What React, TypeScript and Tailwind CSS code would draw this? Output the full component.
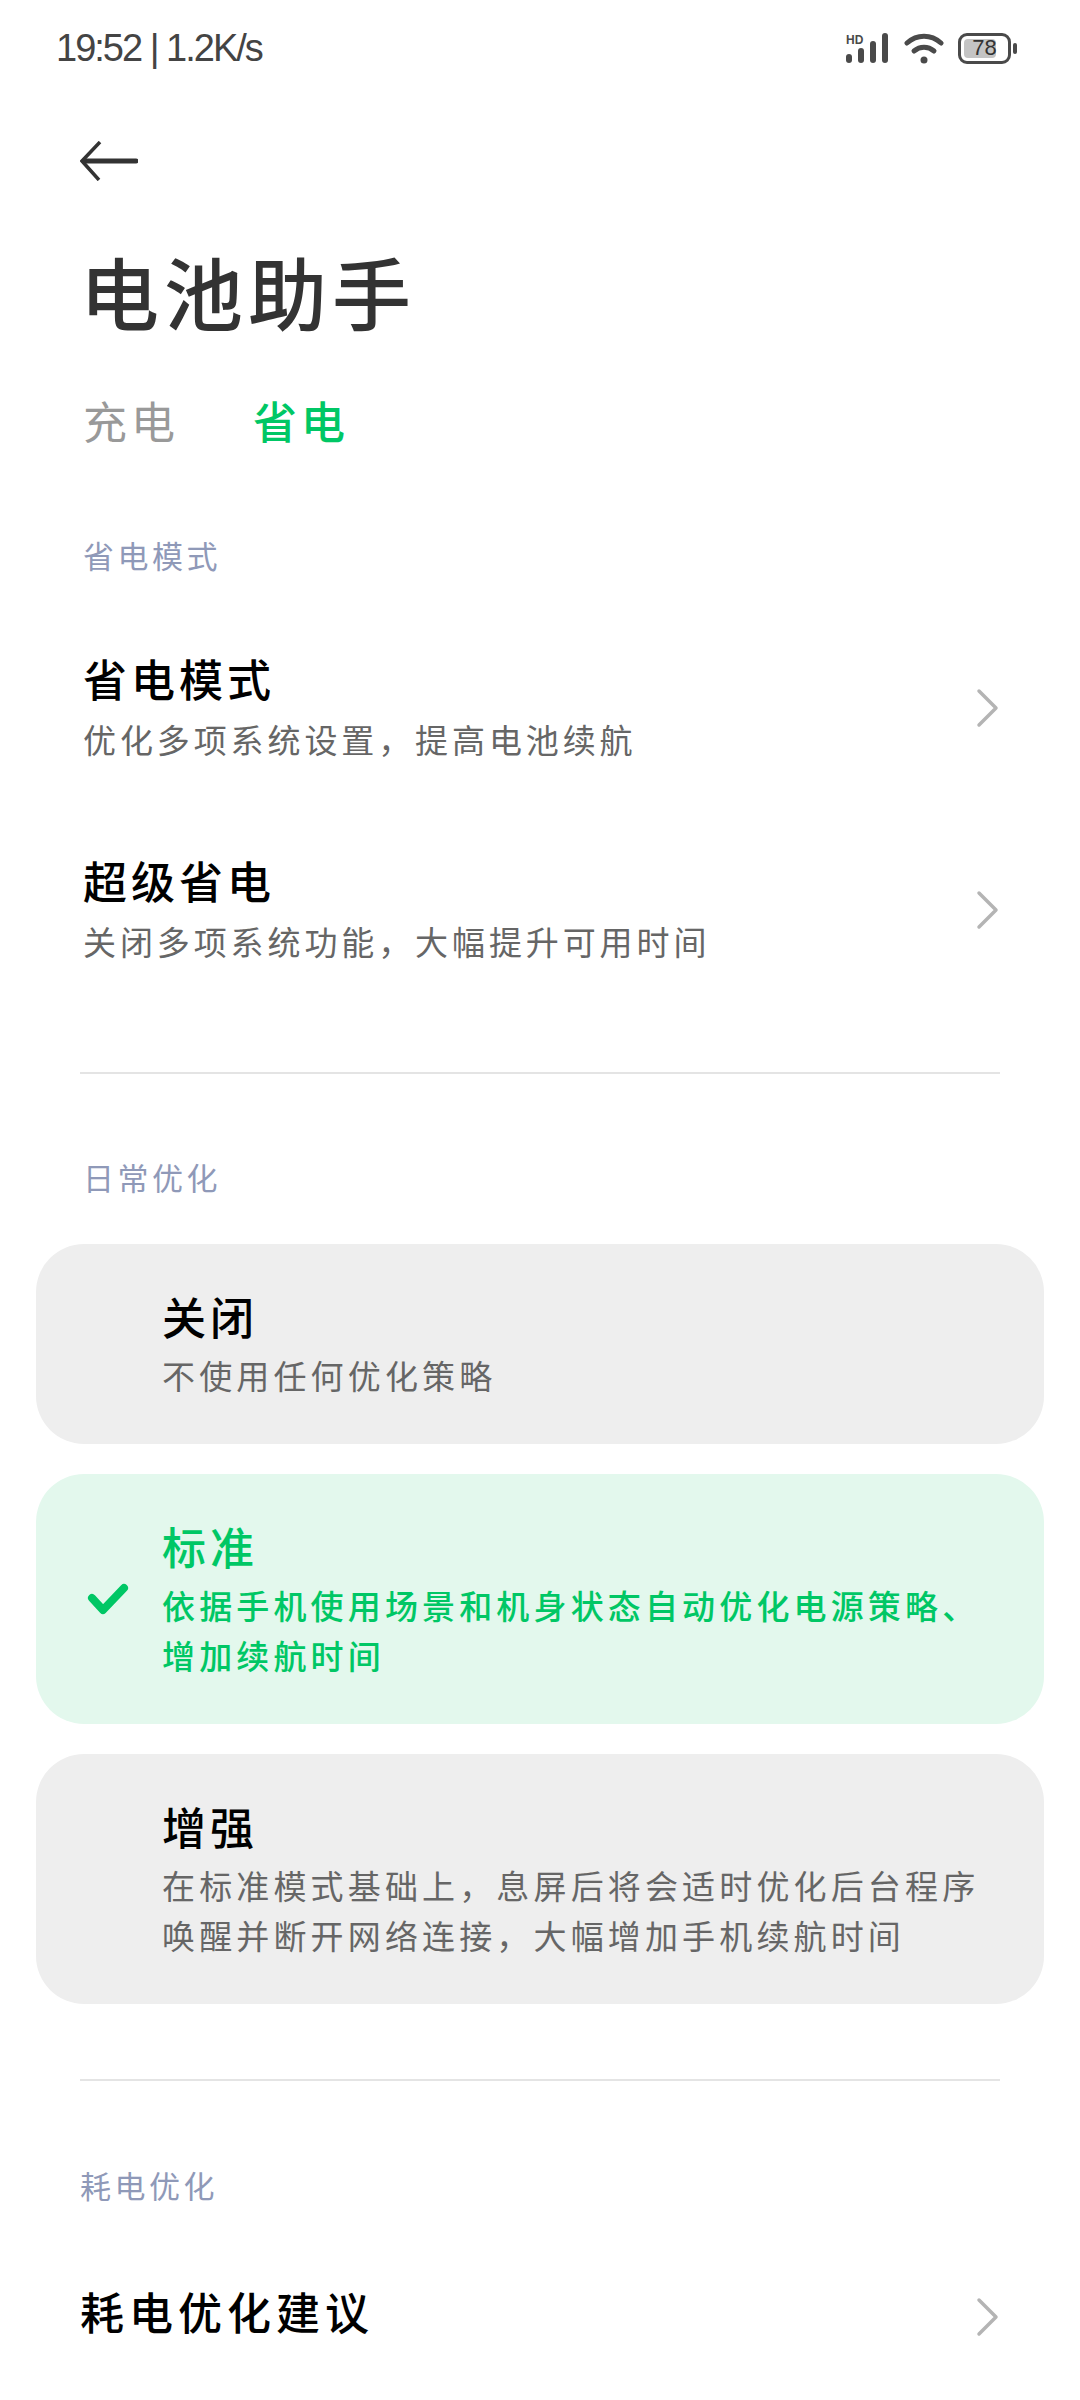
const FONT = "font-['Noto_Sans_CJK_SC',sans-serif]";

function Chevron() {
  return (
    <svg width="24" height="40" viewBox="0 0 24 40" fill="none" stroke="#b4b4b4" strokeWidth="3.5" strokeLinecap="round" strokeLinejoin="round">
      <path d="M3 3l17 17L3 37" />
    </svg>
  );
}

function Divider() {
  return <div className="mx-[80px] h-[2px] bg-[#e4e4e4]" />;
}

function SectionLabel({ children, className }: { children: string; className: string }) {
  return <div className={`text-[31px] leading-[40px] tracking-[3.5px] text-[#8f99b8] ${className}`}>{children}</div>;
}

function Row({ title, sub, className }: { title: string; sub: string; className: string }) {
  return (
    <div className={`flex items-center justify-between pl-[83px] pr-[80px] ${className}`}>
      <div className="pb-[3px]">
        <div className="mb-[9px] text-[44px] leading-[56px] tracking-[4px] font-medium text-black">{title}</div>
        <div className="text-[33px] leading-[48px] tracking-[3.9px] text-[#666]">{sub}</div>
      </div>
      <Chevron />
    </div>
  );
}

function OptionCard({ title, lines, active, className }: { title: string; lines: string[]; active?: boolean; className: string }) {
  return (
    <div className={`relative mx-[36px] rounded-[48px] pl-[126px] pt-[44px] ${active ? "bg-[#e3f8ed]" : "bg-[#eeeeee]"} ${className}`}>
      {active && (
        <svg className="absolute left-[51px] top-[109px]" width="42" height="34" viewBox="0 0 42 34" fill="none" stroke="#00c765" strokeWidth="8" strokeLinecap="round" strokeLinejoin="round">
          <path d="M5 15l11 12L37 5" />
        </svg>
      )}
      <div className={`mb-[6px] text-[44px] leading-[56px] tracking-[4px] font-medium ${active ? "text-[#00c765]" : "text-black"}`}>{title}</div>
      {lines.map((line) => (
        <div key={line} className={`text-[33px] leading-[50px] tracking-[4.15px] whitespace-nowrap ${active ? "text-[#00c765] font-medium" : "text-[#666]"}`}>{line}</div>
      ))}
    </div>
  );
}

export default function App() {
  return (
    <div className={`w-[1080px] h-[2400px] overflow-hidden bg-white ${FONT}`}>
      {/* Status bar */}
      <div className="h-[96px] flex items-center justify-between pl-[56px] pr-[63px]">
        <span className="text-[38px] text-[#444] font-['Liberation_Sans',sans-serif] tracking-[-2px]">19:52 | 1.2K/s</span>
        <div className="flex items-center gap-[14px]">
          <svg width="44" height="32" viewBox="0 0 44 32" fill="#4a4a4a">
            <text x="0" y="12" fontSize="12" fontWeight="700" fontFamily="Liberation Sans">HD</text>
            <rect x="0" y="22" width="6" height="9" rx="3" />
            <rect x="12" y="16" width="6" height="15" rx="3" />
            <rect x="24" y="9" width="6" height="22" rx="3" />
            <rect x="36" y="1" width="6" height="30" rx="3" />
          </svg>
          <svg width="40" height="32" viewBox="0 0 40 32" fill="none" stroke="#4a4a4a" strokeWidth="5" strokeLinecap="round">
            <path d="M3 11c10-9 24-9 34 0" />
            <path d="M10 19c6-5 14-5 20 0" />
            <circle cx="20" cy="28" r="3.5" fill="#4a4a4a" stroke="none" />
          </svg>
          <div className="flex items-center gap-[2px]">
            <div className="relative w-[53px] h-[31px] rounded-[9px] border-[3px] border-[#4a4a4a] p-[3px]">
              <div className="h-full w-[78%] rounded-[4px] bg-[#c4c4c4]" />
              <span className="absolute inset-0 flex items-center justify-center text-[22px] leading-none text-[#333] font-['Liberation_Sans',sans-serif]">78</span>
            </div>
            <div className="w-[4px] h-[11px] rounded-[2px] bg-[#4a4a4a]" />
          </div>
        </div>
      </div>

      {/* Back arrow */}
      <div className="pl-[80px] pt-[45px] h-[116px]">
        <svg width="58" height="40" viewBox="0 0 58 40" fill="none" stroke="#333" strokeWidth="3.5">
          <path d="M20 1L2 20l17 19" />
          <path d="M4 20h52" strokeWidth="5" strokeLinecap="round" />
        </svg>
      </div>

      <h1 className="pl-[80px] mt-[27px] h-[104px] text-[79px] leading-[104px] tracking-[5px] font-medium text-[#333]">电池助手</h1>

      {/* Tabs */}
      <div className="flex gap-[74px] pl-[83px] mt-[49px] text-[44px] leading-[56px] tracking-[4px]">
        <span className="text-[#999]">充电</span>
        <span className="text-[#00c765] font-medium">省电</span>
      </div>

      <SectionLabel className="mt-[87px] pl-[83px]">省电模式</SectionLabel>

      <Row className="mt-[32px] h-[202px]" title="省电模式" sub="优化多项系统设置，提高电池续航" />
      <Row className="h-[202px]" title="超级省电" sub="关闭多项系统功能，大幅提升可用时间" />

      <div className="mt-[61px]"><Divider /></div>

      <SectionLabel className="mt-[83px] pl-[83px]">日常优化</SectionLabel>

      <div className="mt-[47px] flex flex-col gap-[30px]">
        <OptionCard className="h-[200px]" title="关闭" lines={["不使用任何优化策略"]} />
        <OptionCard className="h-[250px]" active title="标准" lines={["依据手机使用场景和机身状态自动优化电源策略、", "增加续航时间"]} />
        <OptionCard className="h-[250px]" title="增强" lines={["在标准模式基础上，息屏后将会适时优化后台程序", "唤醒并断开网络连接，大幅增加手机续航时间"]} />
      </div>

      <div className="mt-[75px]"><Divider /></div>

      <SectionLabel className="mt-[84px] pl-[80px]">耗电优化</SectionLabel>

      <div className="mt-[78px] flex items-center justify-between pl-[80px] pr-[80px]">
        <div className="mb-[12px] text-[44px] leading-[56px] tracking-[5px] font-medium text-black">耗电优化建议</div>
        <Chevron />
      </div>
    </div>
  );
}
